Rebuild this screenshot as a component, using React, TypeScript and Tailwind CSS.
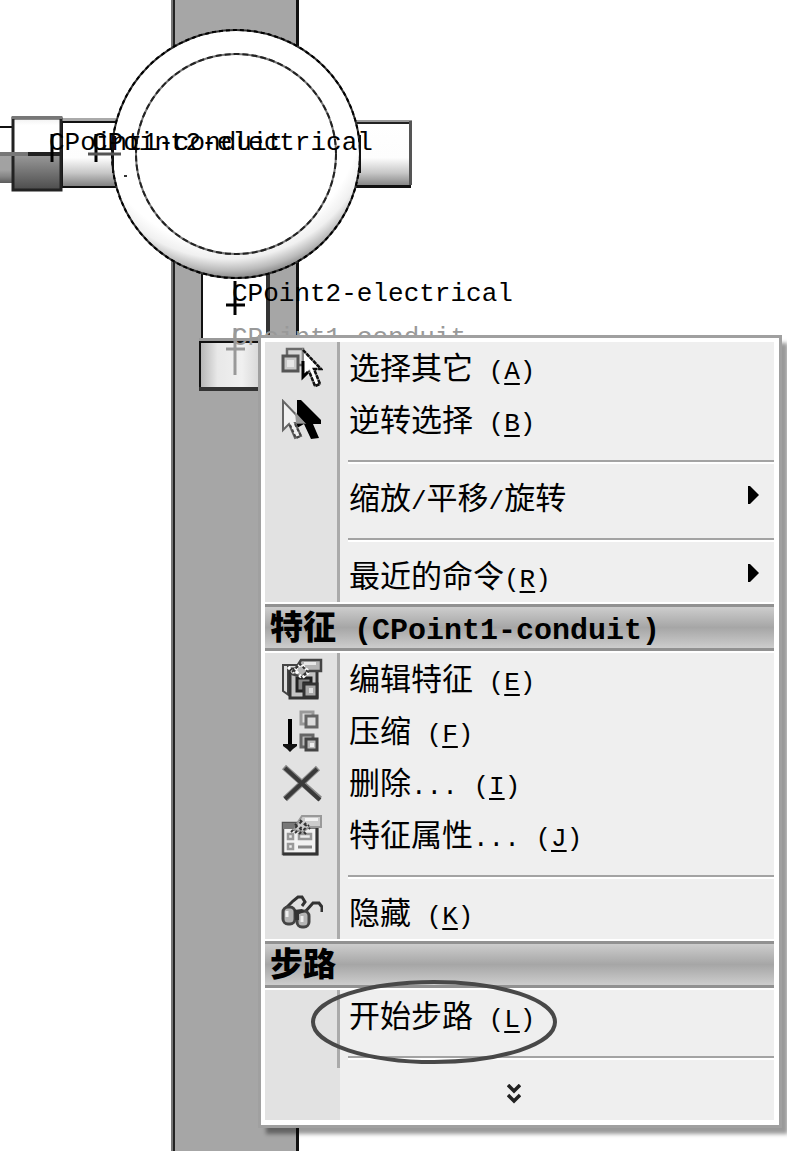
import type { ReactNode } from 'react';

const CJK = "font-['Noto_Sans_CJK_SC',sans-serif] text-[31px]";
const MONO = "font-['Liberation_Mono','Noto_Sans_CJK_SC',monospace] text-[26px]";

function Drawing() {
  return (
    <svg className="absolute inset-0 h-full w-full" aria-hidden="true">
      <defs>
        <linearGradient id="pipe" x1="0" y1="0" x2="0" y2="1">
          <stop offset="0" stopColor="#fff" />
          <stop offset="0.55" stopColor="#fdfdfd" />
          <stop offset="0.78" stopColor="#c8c8c8" />
          <stop offset="1" stopColor="#7c7c7c" />
        </linearGradient>
        <linearGradient id="collar" x1="0" y1="0" x2="0" y2="1">
          <stop offset="0" stopColor="#f0f0f0" />
          <stop offset="0.1" stopColor="#fff" />
          <stop offset="0.48" stopColor="#fff" />
          <stop offset="0.52" stopColor="#989898" />
          <stop offset="1" stopColor="#4c4c4c" />
        </linearGradient>
        <linearGradient id="socket" x1="0" y1="0" x2="1" y2="0">
          <stop offset="0" stopColor="#b4b4b4" />
          <stop offset="0.25" stopColor="#e8e8e8" />
          <stop offset="0.6" stopColor="#f0f0f0" />
          <stop offset="1" stopColor="#c8c8c8" />
        </linearGradient>
        <radialGradient id="ring" gradientUnits="userSpaceOnUse" cx="228" cy="112" r="167">
          <stop offset="0.8" stopColor="#fff" />
          <stop offset="0.88" stopColor="#f0f0f0" />
          <stop offset="0.95" stopColor="#bababa" />
          <stop offset="1" stopColor="#858585" />
        </radialGradient>
      </defs>
      <rect x="172" y="0" width="127" height="100%" fill="#a6a6a6" />
      <rect x="171" y="0" width="2" height="100%" fill="#777" />
      <rect x="173" y="0" width="2" height="100%" fill="#222" />
      <rect x="296" y="0" width="3" height="100%" fill="#111" />

      <rect x="202" y="260" width="65" height="80" fill="#fff" />
      <rect x="201" y="260" width="2" height="80" fill="#111" />
      <rect x="266" y="260" width="4" height="80" fill="#333" />
      <rect x="199" y="338" width="70" height="3" fill="#999" />
      <rect x="200" y="342" width="70" height="47" fill="url(#socket)" stroke="#111" strokeWidth="2" />
      <rect x="199" y="387" width="70" height="4" fill="#333" />

      <rect x="0" y="126" width="12" height="2" fill="#111" />
      <rect x="0" y="154" width="12" height="29" fill="url(#pipe)" />
      <rect x="0" y="154" width="12" height="29" fill="#333" opacity="0.45" />
      <rect x="62" y="122" width="54" height="65" fill="url(#pipe)" stroke="#111" strokeWidth="2" />
      <rect x="62" y="118" width="54" height="3" fill="#aaa" />
      <rect x="13" y="118" width="48" height="72" fill="url(#collar)" stroke="#222" strokeWidth="3" />
      <rect x="12" y="116" width="50" height="3" fill="#777" />
      <rect x="350" y="122" width="61" height="65" fill="url(#pipe)" />
      <rect x="350" y="120" width="62" height="2" fill="#999" />
      <rect x="350" y="122" width="62" height="2" fill="#222" />
      <rect x="409" y="121" width="3" height="64" fill="#555" />
      <rect x="350" y="185" width="61" height="3" fill="#111" />

      <circle cx="236" cy="154" r="124" fill="url(#ring)" stroke="#333" strokeWidth="2" />
      <circle cx="236" cy="154" r="124" fill="none" stroke="#000" strokeWidth="2" strokeDasharray="4 3" />
      <circle cx="236" cy="154" r="100" fill="#fff" stroke="#777" strokeWidth="2" />
      <circle cx="236" cy="154" r="100" fill="none" stroke="#222" strokeWidth="2" strokeDasharray="6 3" />
      <path d="M113 135v38M360 135v38" stroke="#111" strokeWidth="2" />
      <rect x="124" y="175" width="3" height="2" fill="#333" />

      <path d="M0 154h30" stroke="#777" strokeWidth="4" />
      <path d="M28 154h32" stroke="#222" strokeWidth="4" />
      <path d="M52 134v28M96 134v28" stroke="#000" strokeWidth="3" />
      <path d="M88 154h33" stroke="#555" strokeWidth="3" />
      <path d="M235 281v34M226 305h19" stroke="#000" strokeWidth="3" />
      <path d="M235 328v47M226 349h19" stroke="#999" strokeWidth="3" />
    </svg>
  );
}

function SelectOtherIcon() {
  return (
    <svg viewBox="0 0 42 42" className="h-[42px] w-[42px]" aria-hidden="true">
      <path d="M6 2h16v16H6z" fill="#d8d8d8" stroke="#6a6a6a" strokeWidth="2.5" />
      <path d="M2 9h15v15H2z" fill="#c9c9c9" stroke="#555" strokeWidth="3" />
      <path d="M6 13h7v7H6z" fill="#e6e6e6" />
      <path d="M22 3v27l6-6 6 15 5-2-6-15h7z" fill="#fff" stroke="#888" strokeWidth="2" />
      <path d="M22 3l18 19h-7l6 15-5 2-6-15" fill="none" stroke="#111" strokeWidth="2.5" strokeDasharray="4 1" />
      <path d="M22 14v16l5-5" fill="none" stroke="#000" strokeWidth="3" />
    </svg>
  );
}

function InvertIcon() {
  return (
    <svg viewBox="0 0 42 42" className="h-[42px] w-[42px]" aria-hidden="true">
      <path d="M16 1v28l7-4 7 15 8-1-6-14h8v-4L20 1z" fill="#000" />
      <path d="M2 2v29l6-6 6 14 6-2-6-13h9z" fill="#f2f2f2" stroke="#666" strokeWidth="2" />
      <path d="M14 13l10 11h-9z" fill="#999" />
      <path d="M9 26l6 13 5-2-6-12" fill="none" stroke="#444" strokeWidth="2" strokeDasharray="3 2" />
    </svg>
  );
}

function EditFeatureIcon() {
  return (
    <svg viewBox="0 0 42 42" className="h-[42px] w-[42px]" aria-hidden="true">
      <path d="M2 7h20v31H9l-7-5z" fill="#ddd" stroke="#444" strokeWidth="2" />
      <path d="M7 8v28" stroke="#444" strokeWidth="2" />
      <path d="M9 11h27v29H9z" fill="#c4c4c4" stroke="#333" strokeWidth="3" />
      <path d="M16 20h14v5h-7v8h-7z" fill="#888" stroke="#222" strokeWidth="3" />
      <path d="M23 26h13v13H23z" fill="#aaa" stroke="#333" strokeWidth="3" />
      <path d="M28 30h4v5h-4z" fill="#e0e0e0" />
      <path d="M20 2h20v11H27l-6 6-10-3 4-6z" fill="#b5b5b5" stroke="#444" strokeWidth="2.5" />
      <path d="M23 4h12v3H23z" fill="#e8e8e8" />
      <path d="M7 9l5 5 8-8 8 8-7 6-6-7" fill="none" stroke="#fff" strokeWidth="3" strokeDasharray="3 2" />
      <path d="M11 14l8-8 8 8-7 5" fill="none" stroke="#333" strokeWidth="2" strokeDasharray="3 2" />
    </svg>
  );
}

function SuppressIcon() {
  return (
    <svg viewBox="0 0 42 42" className="h-[42px] w-[42px]" aria-hidden="true">
      <path d="M9 9v30" stroke="#000" strokeWidth="4" />
      <path d="M2 34h14v2l-4 3-3 3-3-3-4-3z" fill="#111" />
      <g fill="#ddd" strokeWidth="3">
        <path d="M20 2h12v12H20z" stroke="#999" />
        <path d="M25 6h11v11H25z" stroke="#666" />
        <path d="M20 25h12v12H20z" fill="#bbb" stroke="#666" />
        <path d="M25 29h11v11H25z" fill="#bbb" stroke="#444" />
      </g>
      <path d="M29 33h4v4h-4z" fill="#eee" />
    </svg>
  );
}

function DeleteIcon() {
  return (
    <svg viewBox="0 0 42 42" className="h-[42px] w-[42px]" aria-hidden="true">
      <path d="M3 5l36 32M37 6L4 37" fill="none" stroke="#888" strokeWidth="6" />
      <path d="M4 6l35 32M36 7L4 37" fill="none" stroke="#3a3a3a" strokeWidth="4" />
    </svg>
  );
}

function PropertiesIcon() {
  return (
    <svg viewBox="0 0 42 42" className="h-[42px] w-[42px]" aria-hidden="true">
      <path d="M2 9h34v31H2z" fill="#f2f2f2" stroke="#555" strokeWidth="2.5" />
      <path d="M2 9h34v6H2z" fill="#777" />
      <path d="M36 14v26H2" fill="none" stroke="#333" strokeWidth="3" />
      <path d="M7 20h5v5H7zM7 30h5v5H7zM18 20h12v5H18z" fill="#eee" stroke="#999" strokeWidth="2.5" />
      <path d="M17 33h14" stroke="#888" strokeWidth="3" />
      <path d="M21 2h19v11H28l-6 5-9-2 4-8z" fill="#ccc" stroke="#999" strokeWidth="2" />
      <path d="M24 4h13v3H24z" fill="#f2f2f2" />
      <path d="M10 18L22 6M14 19L26 8M18 20l10-9M14 10l12 11M19 6l10 9" stroke="#333" strokeWidth="2" strokeDasharray="3 3" />
    </svg>
  );
}

function GlassesIcon() {
  return (
    <svg viewBox="0 0 42 42" className="h-[42px] w-[42px]" aria-hidden="true">
      <path d="M3 18L12 9l5-4h4l3 5-3 4M24 20l8-9h6l3 4v5" fill="none" stroke="#333" strokeWidth="3" />
      <rect x="2" y="15" width="12" height="17" rx="5" fill="#b5b5b5" stroke="#444" strokeWidth="3" />
      <rect x="16" y="19" width="12" height="16" rx="5" fill="#b5b5b5" stroke="#444" strokeWidth="3" />
      <path d="M13 18l8-1 3 3-6 2v6h-4z" fill="#333" />
      <path d="M6 19v6M21 24v6" stroke="#eee" strokeWidth="3" />
    </svg>
  );
}

type ItemProps = {
  label: ReactNode;
  letter?: string;
  gap?: boolean;
  icon?: ReactNode;
  submenu?: boolean;
  children?: ReactNode;
};

function Item({ label, letter, gap = true, icon, submenu, children }: ItemProps) {
  return (
    <div className="relative">
      <button type="button" role="menuitem" className="flex h-[52px] w-full items-stretch text-left">
        <span className="flex w-[75px] shrink-0 items-center border-r-[3px] border-[#aaa] bg-[#e2e2e2] pl-4">
          {icon}
        </span>
        <span className={`ml-[9px] flex items-baseline whitespace-pre leading-[48px] ${CJK}`}>
          {label}
          {letter && (
            <span className={MONO}>
              {gap ? ' (' : '('}
              <span className="underline decoration-2 underline-offset-4">{letter}</span>)
            </span>
          )}
        </span>
        {submenu && (
          <svg viewBox="0 0 11 18" className="mt-3.5 mr-[15px] ml-auto h-[18px] w-[11px]" aria-hidden="true">
            <path d="M0 0h2l9 9-9 9H0z" fill="#000" />
          </svg>
        )}
      </button>
      {children}
    </div>
  );
}

function Separator() {
  return (
    <div role="separator" className="flex h-[26px]">
      <div className="w-[75px] shrink-0 border-r-[3px] border-[#aaa] bg-[#e2e2e2]" />
      <div className="mt-3.5 ml-2 h-[4px] flex-1 border-t-2 border-[#a3a3a3] bg-white" />
    </div>
  );
}

function Header({ children }: { children: ReactNode }) {
  return (
    <div className="border-y-2 border-white">
      <h2 className="flex h-[47px] items-baseline border-y-[3px] border-[#919191] bg-linear-to-b from-[#cdcdcd] via-[#a6a6a6] to-[#cdcdcd] pl-[5px] font-['Noto_Sans_CJK_SC',sans-serif] text-[33px] leading-[37px] font-black whitespace-pre">
        {children}
      </h2>
    </div>
  );
}

function Mono({ children }: { children: ReactNode }) {
  return <span className={MONO}>{children}</span>;
}

export default function App() {
  const label = `absolute whitespace-pre leading-[30px] ${MONO}`;
  return (
    <main className="relative min-h-screen overflow-hidden bg-white text-black">
      <Drawing />
      <span className={`${label} top-[128px] left-[49px]`}>CPoint1-conduit</span>
      <span className={`${label} top-[128px] left-[92px]`}>CPoint2-electrical</span>
      <span className={`${label} top-[279px] left-[232px]`}>CPoint2-electrical</span>
      <span className={`${label} top-[323px] left-[232px] text-[#999]`}>CPoint1-conduit</span>

      <div
        role="menu"
        className="absolute top-[335px] left-[258px] w-[524px] border-[3px] border-[#a0a0a0] bg-white px-1 pt-1 pr-[5px] pb-[5px] shadow-[7px_7px_4px_-1px_rgba(0,0,0,0.4)]"
      >
        <div className="bg-[#efefef]">
          <Item label="选择其它" letter="A" icon={<SelectOtherIcon />} />
          <Item label="逆转选择" letter="B" icon={<InvertIcon />} />
          <Separator />
          <Item label={<>缩放<Mono>/</Mono>平移<Mono>/</Mono>旋转</>} submenu />
          <Separator />
          <Item label="最近的命令" letter="R" gap={false} submenu />
          <Header>
            特征
            <span className="font-['Liberation_Mono',monospace] text-[30px] font-bold"> (CPoint1-conduit)</span>
          </Header>
          <Item label="编辑特征" letter="E" icon={<EditFeatureIcon />} />
          <Item label="压缩" letter="F" icon={<SuppressIcon />} />
          <Item label={<>删除<Mono>...</Mono></>} letter="I" icon={<DeleteIcon />} />
          <Item label={<>特征属性<Mono>...</Mono></>} letter="J" icon={<PropertiesIcon />} />
          <Separator />
          <Item label="隐藏" letter="K" icon={<GlassesIcon />} />
          <Header>步路</Header>
          <Item label="开始步路" letter="L">
            <svg
              viewBox="0 0 248 86"
              className="pointer-events-none absolute -top-[11px] left-[45px] z-10 h-[86px] w-[248px]"
              aria-hidden="true"
            >
              <ellipse cx="124" cy="43" rx="121" ry="40" fill="none" stroke="#484848" strokeWidth="4" />
            </svg>
          </Item>
          <Separator />
          <button type="button" aria-label="展开" className="flex h-[52px] w-full items-stretch">
            <span className="w-[75px] shrink-0 bg-[#e2e2e2]" />
            <span className="flex flex-1 items-center pl-[167px]">
              <svg viewBox="0 0 14 20" className="h-[20px] w-[14px]" aria-hidden="true">
                <path d="M1 1l6 6 6-6M1 11l6 6 6-6" fill="none" stroke="#222" strokeWidth="3.5" />
              </svg>
            </span>
          </button>
        </div>
      </div>
    </main>
  );
}
